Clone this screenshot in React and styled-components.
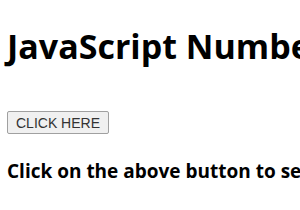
import styled, { createGlobalStyle } from "styled-components";

const Global = createGlobalStyle`
  body {
    margin: 0;
    background: #fff;
    overflow: hidden;
  }
`;

const Page = styled.div`
  padding: 0 7px;
  white-space: nowrap;
  font-family: "Open Sans", "Noto Sans", sans-serif;
  color: #000;
`;

const Title = styled.h1`
  margin: 0;
  padding-top: 25px;
  font-size: 34px;
  line-height: 42px;
  font-weight: 700;
`;

const ClickButton = styled.button`
  display: block;
  margin-top: 44px;
  height: 23px;
  padding: 0 8px;
  font-family: "Liberation Sans", Arial, sans-serif;
  font-size: 14px;
  color: #333;
  background: #f0f0f0;
  border: 1px solid #a0a0a0;
  border-radius: 2px;
`;

const Message = styled.p`
  margin: 0;
  padding-top: 24px;
  font-size: 19px;
  line-height: 26px;
  font-weight: 700;
`;

export default function App() {
  return (
    <>
      <Global />
      <Page>
        <Title>JavaScript Number Methods</Title>
        <ClickButton>CLICK HERE</ClickButton>
        <Message>Click on the above button to see the result</Message>
      </Page>
    </>
  );
}
